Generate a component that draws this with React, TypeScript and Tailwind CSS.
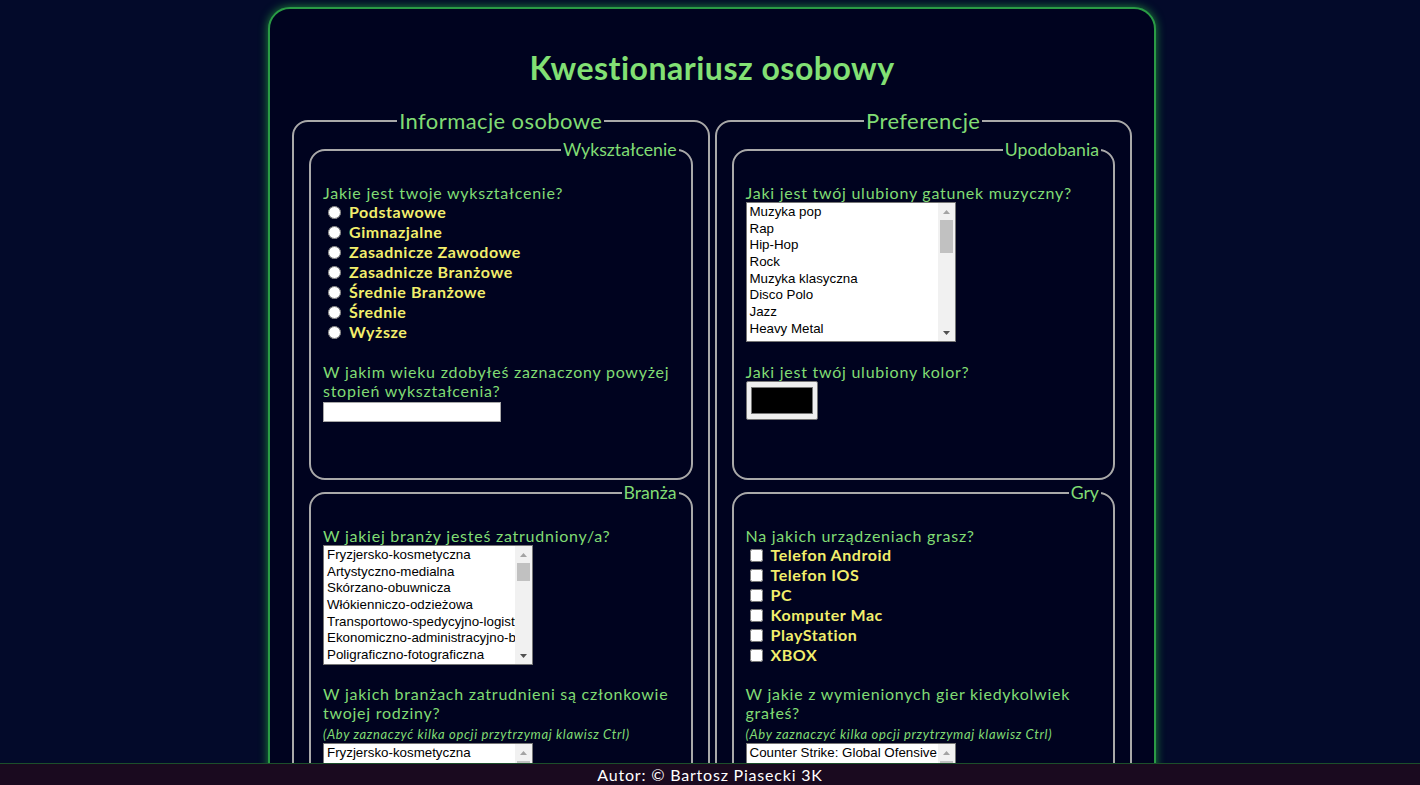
const branze = [
  'Fryzjersko-kosmetyczna',
  'Artystyczno-medialna',
  'Skórzano-obuwnicza',
  'Włókienniczo-odzieżowa',
  'Transportowo-spedycyjno-logistyczna',
  'Ekonomiczno-administracyjno-biurowa',
  'Poligraficzno-fotograficzna',
  'Mechaniczna',
  'Elektryczno-elektroniczna',
  'Elektroenergetyczna',
  'Informatyczna',
  'Budowlana',
  'Drzewno-meblarska',
  'Ogrodniczo-rolnicza',
  'Leśna',
  'Rybacka',
  'Spożywcza',
  'Hotelarsko-gastronomiczno-turystyczna',
  'Handlowa',
  'Chemiczna',
  'Górniczo-wiertnicza',
  'Hutniczo-odlewnicza',
  'Metalurgiczna',
  'Motoryzacyjna',
  'Lotnicza',
  'Morska',
  'Ochrona i bezpieczeństwo',
  'Opieka zdrowotna',
  'Pomoc społeczna',
  'Sportowo-rekreacyjna',
  'Audiowizualna',
  'Inna',
];

const gatunki = [
  'Muzyka pop',
  'Rap',
  'Hip-Hop',
  'Rock',
  'Muzyka klasyczna',
  'Disco Polo',
  'Jazz',
  'Heavy Metal',
  'Reggae',
  'Blues',
  'Country',
  'Techno',
  'House',
  'Punk',
  'Soul',
  'Funk',
  'Trap',
  'Dubstep',
  'Folk',
  'Indie',
  'Trance',
  'Drum and Bass',
  'Grunge',
  'Opera',
  'K-pop',
  'Synthwave',
];

const gry = [
  'Counter Strike: Global Ofensive',
  'League of Legends',
  'Minecraft',
  'Fortnite',
  'Grand Theft Auto V',
  'Wiedźmin 3: Dziki Gon',
  'Overwatch',
  'World of Warcraft',
  'FIFA',
  'Rocket League',
  'Among Us',
  'Valorant',
  'Apex Legends',
  'The Sims 4',
  'Call of Duty',
  'Dota 2',
  'Roblox',
  'PUBG',
  'Cyberpunk 2077',
  'Rainbow Six Siege',
];

const wyksztalcenie = [
  'Podstawowe',
  'Gimnazjalne',
  'Zasadnicze Zawodowe',
  'Zasadnicze Branżowe',
  'Średnie Branżowe',
  'Średnie',
  'Wyższe',
];

const urzadzenia = ['Telefon Android', 'Telefon IOS', 'PC', 'Komputer Mac', 'PlayStation', 'XBOX'];

const questionCls = 'text-[16px] leading-[19px] tracking-[0.75px]';
const hintCls = 'mt-1 text-[13px] italic leading-4 tracking-[0.65px]';
const labelCls = 'flex h-5 items-center text-[16px] font-bold tracking-[0.55px] text-[#f2ee6c]';

// listbox drawn like a Windows multi-select, with a classic scrollbar
function ListBox({ items, height, thumb }: { items: string[]; height: string; thumb: string }) {
  return (
    <div
      role="listbox"
      aria-multiselectable="true"
      className={`flex w-[210px] ${height} overflow-hidden border border-[#767676] bg-white font-['Liberation_Sans',Arial,sans-serif] text-[13.333px] tracking-normal text-black`}
    >
      <div className="min-w-0 flex-1 overflow-y-auto overflow-x-hidden [scrollbar-width:none]">
        {items.map((item) => (
          <div key={item} role="option" className="h-[16.7px] overflow-hidden whitespace-nowrap pl-[3px] leading-[17px]">
            {item}
          </div>
        ))}
      </div>
      <div className="flex w-[17px] shrink-0 flex-col bg-[#f1f1f1]">
        <div className="grid h-[17px] shrink-0 place-items-center">
          <svg width="7" height="4" viewBox="0 0 7 4">
            <polygon points="3.5,0 7,4 0,4" fill="#a3a3a3" />
          </svg>
        </div>
        <div className="flex-1">
          <div className={`mx-[2px] ${thumb} bg-[#c1c1c1]`} />
        </div>
        <div className="grid h-[17px] shrink-0 place-items-center">
          <svg width="7" height="4" viewBox="0 0 7 4">
            <polygon points="0,0 7,0 3.5,4" fill="#505050" />
          </svg>
        </div>
      </div>
    </div>
  );
}

function Outer({ title, children }: { title: string; children: React.ReactNode }) {
  return (
    <fieldset className="rounded-2xl border-2 border-[#a9a9a9] px-[15px] pb-4">
      <legend className="mx-auto px-0.5 text-[22px] leading-[26px] tracking-[0.4px]">{title}</legend>
      <div className="flex flex-col gap-[2px] pt-[5px]">{children}</div>
    </fieldset>
  );
}

function Inner({ title, tall, children }: { title: string; tall?: boolean; children: React.ReactNode }) {
  return (
    <fieldset className={`rounded-2xl border-2 border-[#a9a9a9] px-3 ${tall ? 'h-[341px]' : 'pb-6'}`}>
      <legend className="ml-auto px-0.5 text-[17.7px] leading-[22px]">{title}</legend>
      <div className="pt-[22px]">{children}</div>
    </fieldset>
  );
}

export default function App() {
  return (
    <div className="min-h-screen bg-[#030a2a] pt-[7px] pb-10 font-['Lato','Open_Sans',sans-serif] text-[#80dc74]">
      <main className="ml-[calc(50%-442px)] w-[888px] rounded-t-[22px] border-2 border-[#2a9b45] bg-[#00031f] px-[22px] pb-10 shadow-[0_0_10px_#1e8a3a]">
        <h1 className="pt-10 text-center text-[32px] font-bold leading-[37px] tracking-[0.5px] text-[#82e074]">
          Kwestionariusz osobowy
        </h1>

        <form className="mt-[22px] grid grid-cols-2 gap-[5px]">
          <Outer title="Informacje osobowe">
            <Inner title="Wykształcenie" tall>
              <p className={questionCls}>Jakie jest twoje wykształcenie?</p>
              <div className="flex flex-col">
                {wyksztalcenie.map((w) => (
                  <label key={w} className={labelCls}>
                    <input type="radio" name="wyksztalcenie" className="ml-[5px] mr-[8px] h-[13px] w-[13px]" />
                    {w}
                  </label>
                ))}
              </div>
              <p className={`mt-5 ${questionCls}`}>W jakim wieku zdobyłeś zaznaczony powyżej stopień wykształcenia?</p>
              <input
                type="text"
                className="mt-0.5 block h-5 w-[178px] border border-[#a8a8a8] bg-white px-1 text-[13px] text-black"
              />
            </Inner>

            <Inner title="Branża">
              <p className={questionCls}>W jakiej branży jesteś zatrudniony/a?</p>
              <ListBox items={branze} height="h-[120px]" thumb="h-[18px]" />
              <p className={`mt-[19px] ${questionCls}`}>W jakich branżach zatrudnieni są członkowie twojej rodziny?</p>
              <p className={hintCls}>(Aby zaznaczyć kilka opcji przytrzymaj klawisz Ctrl)</p>
              <div className="mt-px">
                <ListBox items={branze} height="h-[120px]" thumb="h-[18px]" />
              </div>
            </Inner>
          </Outer>

          <Outer title="Preferencje">
            <Inner title="Upodobania" tall>
              <p className={questionCls}>Jaki jest twój ulubiony gatunek muzyczny?</p>
              <ListBox items={gatunki} height="h-[140px]" thumb="h-[33px]" />
              <p className={`mt-5 ${questionCls}`}>Jaki jest twój ulubiony kolor?</p>
              <input
                type="color"
                defaultValue="#000000"
                className="block h-[39px] w-[72px] rounded-[2px] border border-[#767676] bg-[#efefef] px-[2px] py-px"
              />
            </Inner>

            <Inner title="Gry">
              <p className={questionCls}>Na jakich urządzeniach grasz?</p>
              <div className="flex flex-col">
                {urzadzenia.map((u) => (
                  <label key={u} className={labelCls}>
                    <input type="checkbox" className="ml-[4px] mr-[8px] h-[13px] w-[13px]" />
                    {u}
                  </label>
                ))}
              </div>
              <p className={`mt-[19px] ${questionCls}`}>W jakie z wymienionych gier kiedykolwiek grałeś?</p>
              <p className={hintCls}>(Aby zaznaczyć kilka opcji przytrzymaj klawisz Ctrl)</p>
              <div className="mt-px">
                <ListBox items={gry} height="h-[120px]" thumb="h-[30px]" />
              </div>
            </Inner>
          </Outer>
        </form>
      </main>

      <footer className="fixed inset-x-0 bottom-0 h-[22px] border-t border-[#1c4f2b] bg-[#1a0a1f] text-center text-[16px] leading-[21px] tracking-[0.8px] text-white">
        Autor: © Bartosz Piasecki 3K
      </footer>
    </div>
  );
}
